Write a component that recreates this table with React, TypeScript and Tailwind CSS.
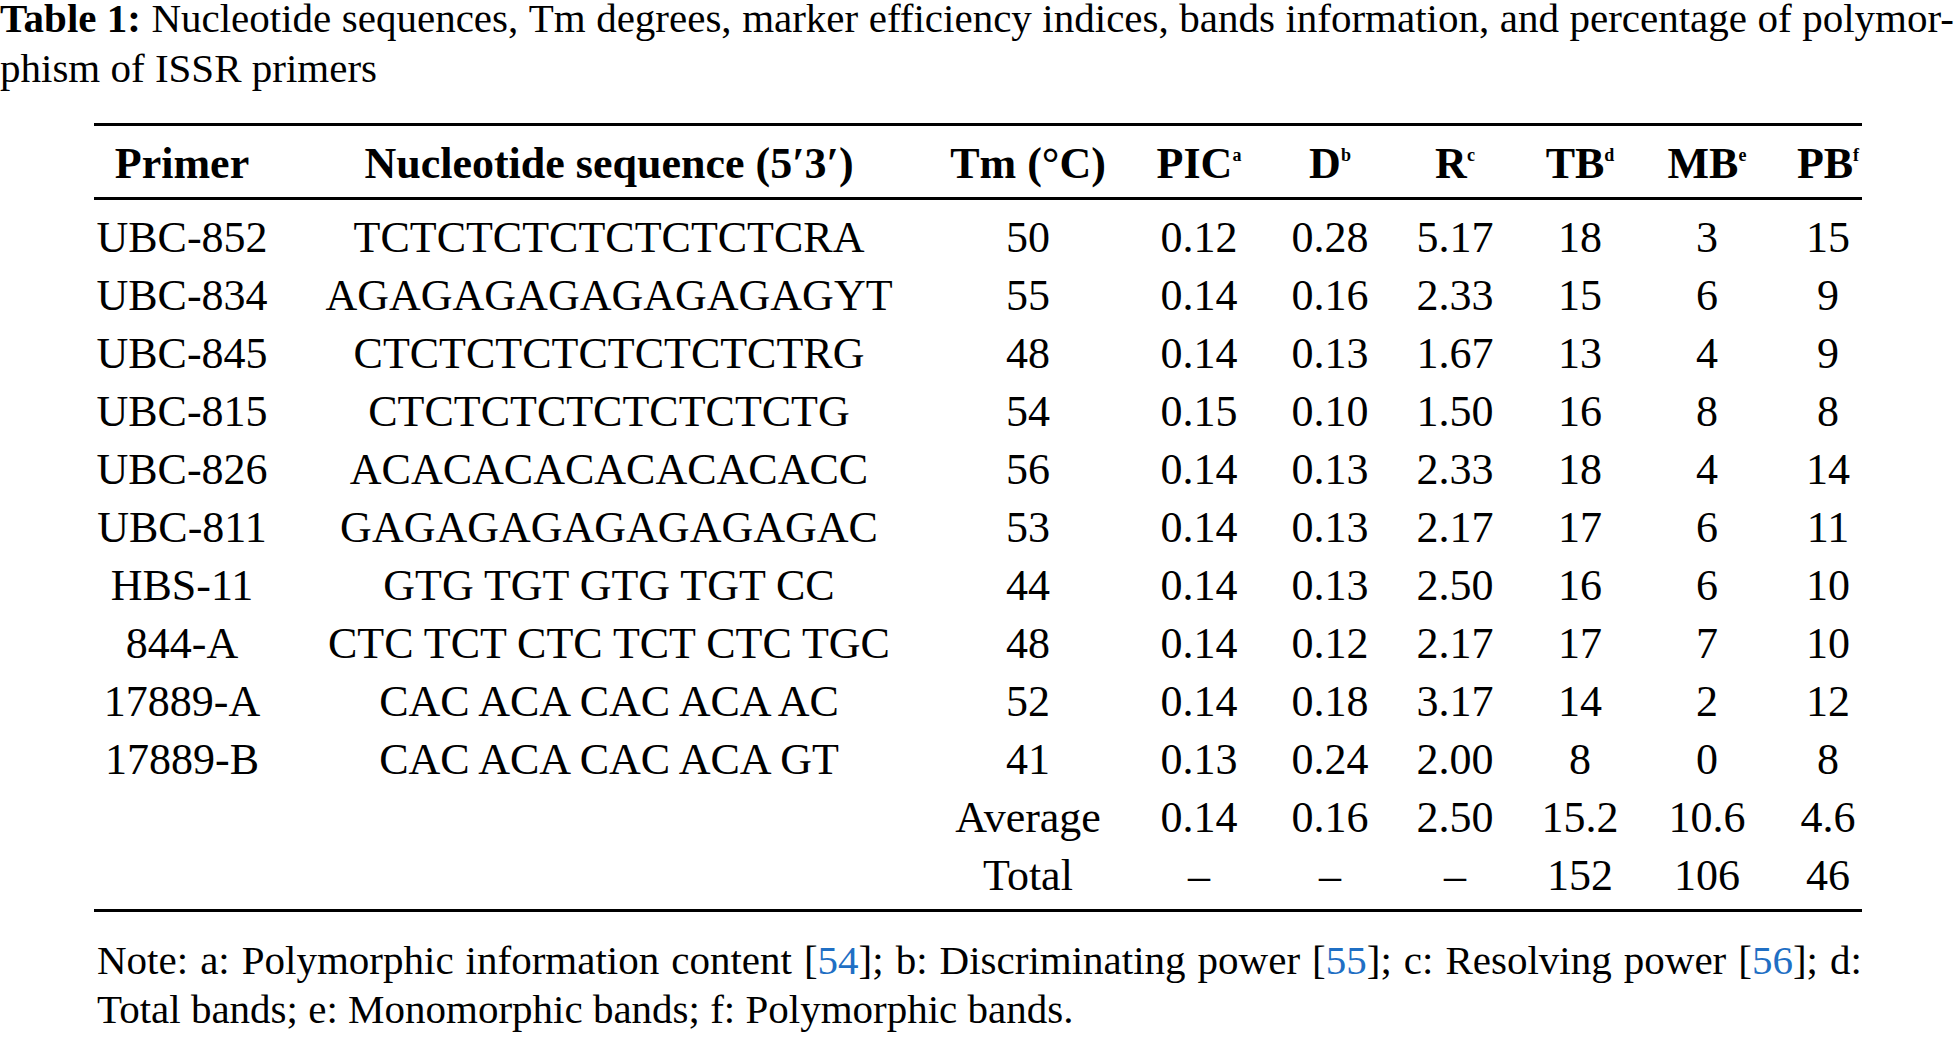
import type { ReactNode } from "react";

const cols =
  "grid grid-cols-[176px_678px_160px_182px_80px_170px_80px_174px_68px] items-baseline text-center whitespace-nowrap";

type Row = [string, string, string, string, string, string, string, string, string];

const rows: Row[] = [
  ["UBC-852", "TCTCTCTCTCTCTCTCRA", "50", "0.12", "0.28", "5.17", "18", "3", "15"],
  ["UBC-834", "AGAGAGAGAGAGAGAGYT", "55", "0.14", "0.16", "2.33", "15", "6", "9"],
  ["UBC-845", "CTCTCTCTCTCTCTCTRG", "48", "0.14", "0.13", "1.67", "13", "4", "9"],
  ["UBC-815", "CTCTCTCTCTCTCTCTG", "54", "0.15", "0.10", "1.50", "16", "8", "8"],
  ["UBC-826", "ACACACACACACACACC", "56", "0.14", "0.13", "2.33", "18", "4", "14"],
  ["UBC-811", "GAGAGAGAGAGAGAGAC", "53", "0.14", "0.13", "2.17", "17", "6", "11"],
  ["HBS-11", "GTG TGT GTG TGT CC", "44", "0.14", "0.13", "2.50", "16", "6", "10"],
  ["844-A", "CTC TCT CTC TCT CTC TGC", "48", "0.14", "0.12", "2.17", "17", "7", "10"],
  ["17889-A", "CAC ACA CAC ACA AC", "52", "0.14", "0.18", "3.17", "14", "2", "12"],
  ["17889-B", "CAC ACA CAC ACA GT", "41", "0.13", "0.24", "2.00", "8", "0", "8"],
  ["", "", "Average", "0.14", "0.16", "2.50", "15.2", "10.6", "4.6"],
  ["", "", "Total", "–", "–", "–", "152", "106", "46"]
];

function Head({ label, sup }: { label: string; sup?: string }): JSX.Element {
  return (
    <span>
      {label}
      {sup ? <span className="relative top-[-17px] text-[18px] leading-none">{sup}</span> : null}
    </span>
  );
}

function Ref({ n }: { n: string }): JSX.Element {
  return (
    <span>
      [<span className="text-[#1f6fc4]">{n}</span>];
    </span>
  );
}

// a justified line: words spread across the full width
function Justified({ words }: { words: ReactNode[] }): JSX.Element {
  return (
    <div className="flex justify-between whitespace-nowrap">
      {words.map((w, i) => (
        <span key={i}>{w}</span>
      ))}
    </div>
  );
}

const captionWords: ReactNode[] = [
  <span className="font-bold">Table 1:</span>,
  ..."Nucleotide sequences, Tm degrees, marker efficiency indices, bands information, and percentage of polymor-".split(" ")
];

const noteWords: ReactNode[] = [
  "Note:",
  "a:",
  "Polymorphic",
  "information",
  "content",
  <Ref n="54" />,
  "b:",
  "Discriminating",
  "power",
  <Ref n="55" />,
  "c:",
  "Resolving",
  "power",
  <Ref n="56" />,
  "d:"
];

export default function App(): JSX.Element {
  return (
    <div className="h-[1037px] w-[1954px] overflow-hidden bg-white text-black [font-family:'Liberation_Serif',serif]">
      <div className="text-[41px]">
        <div className="leading-[36px]">
          <Justified words={captionWords} />
        </div>
        <div className="leading-[64px]">phism of ISSR primers</div>
      </div>

      <div className="ml-[94px] mt-[23px] w-[1768px] text-[44px] leading-[58px]">
        <div className="h-[3px] bg-black" />
        <div className={`${cols} pt-[9px] pb-[4px] font-bold`}>
          <Head label="Primer" />
          <Head label="Nucleotide sequence (5′3′)" />
          <Head label="Tm (°C)" />
          <Head label="PIC" sup="a" />
          <Head label="D" sup="b" />
          <Head label="R" sup="c" />
          <Head label="TB" sup="d" />
          <Head label="MB" sup="e" />
          <Head label="PB" sup="f" />
        </div>
        <div className="h-[3px] bg-black" />
        <div className="pt-[9px] pb-[4px]">
          {rows.map((row, i) => (
            <div key={i} className={cols}>
              {row.map((cell, j) => (
                <span key={j}>{cell}</span>
              ))}
            </div>
          ))}
        </div>
        <div className="h-[3px] bg-black" />
      </div>

      <div className="ml-[97px] mt-[24px] w-[1765px] text-[41px] leading-[49px]">
        <Justified words={noteWords} />
        <div>Total bands; e: Monomorphic bands; f: Polymorphic bands.</div>
      </div>
    </div>
  );
}
